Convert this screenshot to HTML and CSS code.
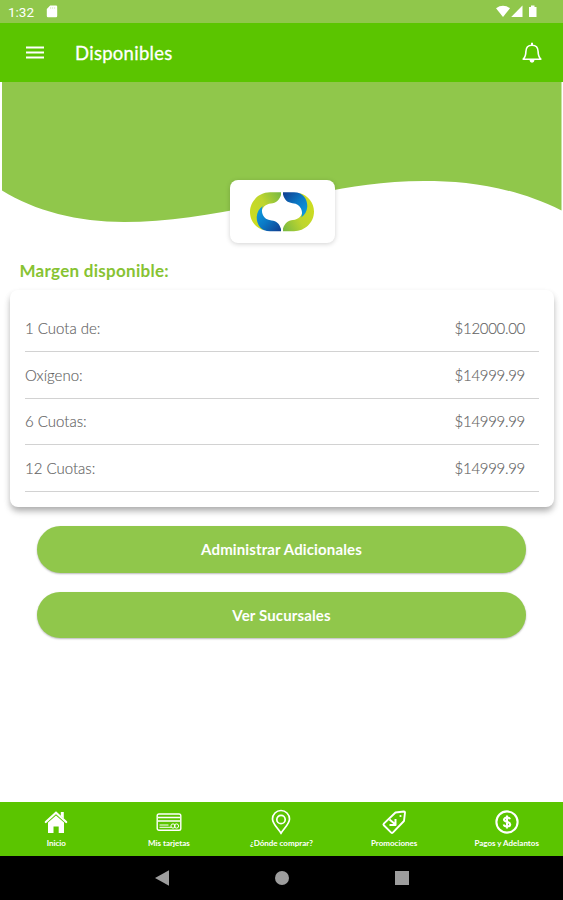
FILE: index.html
```html
<!DOCTYPE html>
<html lang="es">
<head>
<meta charset="utf-8">
<title>Disponibles</title>
<link rel="stylesheet" href="styles.css">
</head>
<body>
<div class="status">
  <span class="time">1:32</span>
  <svg class="sd" width="12" height="13" viewBox="0 0 12 13"><path d="M4.200.5H10q1.200 0 1.200 1.200v9.400q0 1.200-1.200 1.200H2q-1.200 0-1.200-1.200V4z" fill="#fff"/><path d="M4.600 2v2M6.600 2v2M8.600 2v2" stroke="#d5eabb" stroke-width=".7"/></svg>
  <svg class="signals" width="43" height="14" viewBox="0 0 43 14" fill="#fff"><path d="M0 3.300Q7 -1.600 14 3.300L7 12z"/><path d="M26.500.5V12H15.200z"/><path d="M33 2h2V.5h3.500V2h2v10H33z"/></svg>
</div>
<header class="appbar">
  <svg width="18" height="13" viewBox="0 0 18 13"><path d="M0 1.500h18M0 6.500h18M0 11.500h18" stroke="#fff" stroke-width="1.900"/></svg>
  <h1>Disponibles</h1>
  <svg class="bell" width="20" height="22" viewBox="0 0 20 22" fill="none" stroke="#fff" stroke-width="1.600" stroke-linejoin="round"><path d="M1.200 17.200C3.500 15 3.800 13 3.900 9.500 4 5.500 6.500 3.300 10 3.300s6 2.200 6.100 6.200c.1 3.500.4 5.500 2.700 7.700z"/><path d="M10 .8v2.500" stroke-width="2"/><path d="M7.500 18h5q-.3 2.700-2.500 2.700T7.500 18z" fill="#fff" stroke="none"/></svg>
</header>
<section class="hero">
  <svg class="wave" width="563" height="163" viewBox="0 82 563 163"><path d="M2 82H561.500V210.500C511 186 467 181 424 181C383 181 350 187 318 193C254 206 187 222 124 222C78 222 35 211 2 190.500z" fill="#90c74b"/></svg>
  <div class="logo">
    <svg width="64" height="40" viewBox="0 0 64 40">
      <defs>
        <linearGradient id="lime" x1="0" y1=".7" x2="1" y2="0"><stop offset="0" stop-color="#cddd20"/><stop offset=".5" stop-color="#bed52e"/><stop offset="1" stop-color="#75b843"/></linearGradient>
        <linearGradient id="blue" x1="0" y1="0" x2="1" y2="1"><stop offset="0" stop-color="#0da2e4"/><stop offset=".5" stop-color="#0b79c5"/><stop offset="1" stop-color="#113c8e"/></linearGradient>
        <g id="half"><path d="M20 .3H31V3C29.500 8 26 11 21 11.500C15.500 12 12 15.500 11.800 20L14 38.300C6 36 0 29 0 20C0 9 9 .3 20 .3z" fill="url(#lime)"/><path d="M12.800 14C10.500 19 12.500 28 21.500 28.400C26.500 28.800 29.500 31.500 31 37V39.300H20C11.500 39.300 6.500 33 6.700 25C7 20.500 9 16.500 12.800 14z" fill="url(#blue)"/></g>
      </defs>
      <use href="#half"/><use href="#half" transform="rotate(180 32 19.800)"/>
    </svg>
  </div>
</section>
<main>
  <h2>Margen disponible:</h2>
  <div class="card">
    <div class="row"><span>1 Cuota de:</span><span class="amount">$12000.00</span></div>
    <div class="row"><span>Oxígeno:</span><span class="amount">$14999.99</span></div>
    <div class="row"><span>6 Cuotas:</span><span class="amount">$14999.99</span></div>
    <div class="row"><span>12 Cuotas:</span><span class="amount">$14999.99</span></div>
  </div>
  <div class="actions">
    <button>Administrar Adicionales</button>
    <button>Ver Sucursales</button>
  </div>
</main>
<nav class="tabs">
  <a><svg viewBox="0 0 26 26" fill="#fff"><path d="M5 13.500L13 6.500l8 7V24h-5.300v-6.500h-5.200V24H5z"/><path d="M2.800 13L13 3.700 23.200 13" fill="none" stroke="#fff" stroke-width="2.200" stroke-linecap="round"/><path d="M17.800 3h3V9.500l-3-2.500z"/></svg><span>Inicio</span></a>
  <a><svg viewBox="0 0 26 26" fill="none" stroke="#fff"><rect x="1.200" y="5" width="23.600" height="16.200" rx="1.800" stroke-width="1.400"/><path d="M2 8.500h22M2 12h22" stroke-width="1.700"/><path d="M3.500 16h9M3.500 18.300h12" stroke-width="1"/><circle cx="17" cy="17" r="2.100"/><circle cx="20.500" cy="17" r="2.100"/></svg><span>Mis tarjetas</span></a>
  <a><svg viewBox="0 0 26 26" fill="none" stroke="#fff" stroke-width="1.700"><path d="M13 24.200C10 19.500 4.500 14.800 4.500 10a8.500 8.500 0 0 1 17 0C21.500 14.800 16 19.500 13 24.200z"/><circle cx="13" cy="10.500" r="4.200"/></svg><span>¿Dónde comprar?</span></a>
  <a><svg viewBox="0 0 26 26" fill="none" stroke="#fff" stroke-width="1.900" stroke-linejoin="round"><path d="M14.500 3.500L23 2.500q1 0 1 1L23 12 11.800 23.600q-.8.700-1.600 0L2.800 16.300q-.8-.8 0-1.600z"/><circle cx="19.500" cy="7" r="1.100" fill="#fff" stroke="none"/><path d="M8.500 10.500l6 5M14.500 10v6H8.500" stroke-width="2"/></svg><span>Promociones</span></a>
  <a><svg viewBox="0 0 26 26" fill="none" stroke="#fff"><circle cx="13" cy="13" r="10.600" stroke-width="2.100"/><path d="M16 10.300Q15.500 8.500 13 8.500T10 10.600Q10 12.300 13 12.900T16.200 15.300Q16 17.500 13 17.500T9.800 15.500M13 6.500v13" stroke-width="2.100"/></svg><span>Pagos y Adelantos</span></a>
</nav>
<footer class="system">
  <svg width="14" height="16" viewBox="0 0 14 16"><path d="M0 8L14 .3v15.400z" fill="#9d9d9d"/></svg>
  <svg width="14" height="14" viewBox="0 0 14 14"><circle cx="7" cy="7" r="7" fill="#9d9d9d"/></svg>
  <svg width="14" height="14" viewBox="0 0 14 14"><path d="M0 0h14v14H0z" fill="#9d9d9d"/></svg>
</footer>
</body>
</html>
```
FILE: styles.css
```css
* { box-sizing: border-box; }
body {
  margin: 0;
  height: 900px;
  display: flex;
  flex-direction: column;
  overflow: hidden;
  background: #fff;
  font-family: Lato, "Liberation Sans", sans-serif;
}
svg { display: block; flex: none; }
.status {
  height: 23px;
  display: flex;
  align-items: center;
  background: #90c74b;
  color: #fff;
  padding: 0 24px 0 8px;
}
.time { font: 13.5px/23px Roboto, sans-serif; width: 38px; padding-top: 1px; }
.signals { margin-left: auto; margin-top: 1px; }
.appbar {
  height: 59px;
  display: flex;
  align-items: center;
  background: #5bc500;
  padding: 0 21px 0 26px;
}
h1 {
  margin: 0 0 0 31px;
  color: #fff;
  font-size: 18.5px;
  font-weight: 400;
  letter-spacing: .28px;
  -webkit-text-stroke: .3px #fff;
}
.bell { margin-left: auto; }
.hero {
  height: 163px;
  display: grid;
}
.wave, .logo { grid-area: 1 / 1; }
.logo {
  align-self: end;
  justify-self: center;
  position: relative;
  width: 105px;
  height: 63px;
  margin: 0 0 2px 1px;
  display: grid;
  place-items: center;
  background: #fff;
  border-radius: 8px;
  box-shadow: 0 1px 5px rgba(0, 0, 0, .18);
}
main { flex: 1; }
h2 {
  margin: 0;
  height: 45px;
  padding: 15px 0 0 19.5px;
  color: #87c332;
  font-size: 17px;
  line-height: 22px;
  font-weight: 700;
  letter-spacing: .28px;
}
.card {
  margin: 0 9px 0 10px;
  height: 217px;
  padding: 15px 15px 0;
  background: #fff;
  border-radius: 8px;
  box-shadow: 0 5px 7px -1px rgba(0, 0, 0, .26), 0 3px 6px rgba(0, 0, 0, .1);
}
.row {
  height: 46.8px;
  border-bottom: 1px solid #d2d2d2;
  display: flex;
  align-items: center;
  justify-content: space-between;
  padding-right: 14px;
  font-size: 15px;
  font-weight: 300;
  color: #606060;
}
.row span { -webkit-text-stroke: .15px #707070; }
.row .amount { letter-spacing: -.3px; }
.actions {
  padding: 19px 37px 0;
  display: grid;
  gap: 19px;
}
button {
  height: 46.5px;
  border: 0;
  border-radius: 24px;
  background: #90c74b;
  box-shadow: 0 1px 2px rgba(0, 0, 0, .28);
  color: #fff;
  font: 700 15px Lato, sans-serif;
  letter-spacing: .13px;
}
.tabs {
  height: 54px;
  display: grid;
  grid-template-columns: repeat(5, 1fr);
  background: #5bc500;
}
.tabs a {
  display: flex;
  flex-direction: column;
  align-items: center;
  padding-top: 7px;
  color: #fff;
  font-size: 8px;
  line-height: 10px;
  font-weight: 700;
  white-space: nowrap;
}
.tabs svg { width: 26px; height: 26px; margin-bottom: 3px; }
.system {
  height: 44px;
  background: #000;
  display: flex;
  align-items: center;
  justify-content: center;
  gap: 106px;
}
```
